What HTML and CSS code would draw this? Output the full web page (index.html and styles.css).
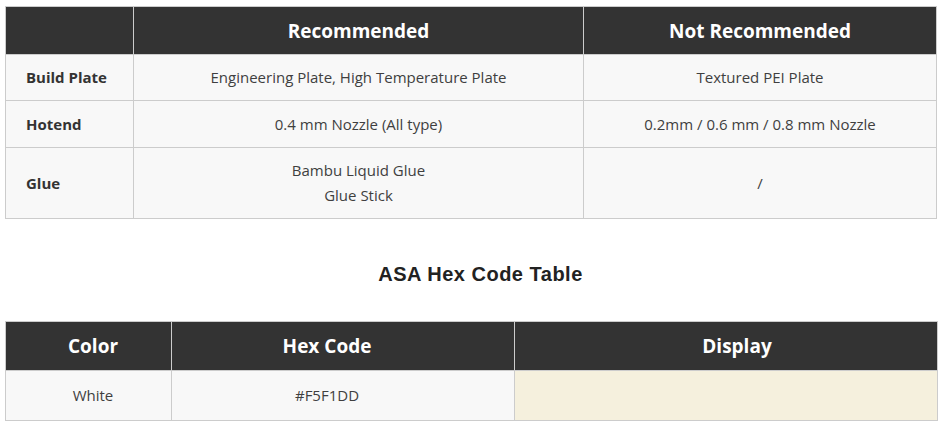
FILE: index.html
```html
<!DOCTYPE html>
<html>
<head>
<meta charset="utf-8">
<link rel="stylesheet" href="styles.css">
</head>
<body>
<table class="tbl tbl-rec">
  <colgroup><col class="c1"><col class="c2"><col class="c3"></colgroup>
  <thead>
    <tr><th></th><th>Recommended</th><th>Not Recommended</th></tr>
  </thead>
  <tbody>
    <tr class="r1"><td class="lbl">Build Plate</td><td>Engineering Plate, High Temperature Plate</td><td>Textured PEI Plate</td></tr>
    <tr class="r2"><td class="lbl">Hotend</td><td>0.4 mm Nozzle (All type)</td><td>0.2mm / 0.6 mm / 0.8 mm Nozzle</td></tr>
    <tr class="r3"><td class="lbl">Glue</td><td>Bambu Liquid Glue<br>Glue Stick</td><td>/</td></tr>
  </tbody>
</table>
<h3 class="title">ASA Hex Code Table</h3>
<table class="tbl tbl-hex">
  <colgroup><col class="h1"><col class="h2"><col class="h3"></colgroup>
  <thead>
    <tr><th class="k1">Color</th><th class="k2">Hex Code</th><th class="k3">Display</th></tr>
  </thead>
  <tbody>
    <tr class="hr"><td class="k1">White</td><td class="k2">#F5F1DD</td><td class="k3 swatch"></td></tr>
  </tbody>
</table>
</body>
</html>
```
FILE: styles.css
```css
html, body { margin: 0; padding: 0; background: #fff; }
body { padding: 6px 0 0 5px; font-family: "Open Sans", "Liberation Sans", sans-serif; color: #333; }
.tbl { border-collapse: collapse; table-layout: fixed; }
.tbl th, .tbl td { border: 1px solid #cccccc; padding: 0; text-align: center; vertical-align: middle; }
.tbl th { background: #333333; color: #fff; font-weight: 700; font-size: 19px; height: 47px; }
.tbl td { background: #f8f8f8; font-size: 15px; line-height: 25px; color: #3f3f3f; }
.tbl-rec { width: 931px; }
.c1 { width: 128px; } .c2 { width: 450px; } .c3 { width: 353px; }
.tbl-rec .lbl { text-align: left; padding-left: 20px; font-weight: 700; color: #333; }
.r1 td { height: 45px; } .r2 td { height: 46px; } .r3 td { height: 70px; }
.title { margin: 0; padding: 44px 0 0 20px; height: 59px; box-sizing: border-box; font-family: "Liberation Sans", Arial, sans-serif; font-size: 20px; letter-spacing: 0.5px; font-weight: 700; text-align: center; width: 931px; color: #222; line-height: 22px; }
.tbl-hex { width: 932px; margin-top: 43px; }
.h1 { width: 166px; } .h2 { width: 343px; } .h3 { width: 423px; }
.tbl-hex th { height: 48px; }
.tbl-hex .k1 { padding-left: 9px; }
.tbl-hex .k2 { padding-right: 32px; }
.tbl-hex .k3 { padding-left: 22px; }
.hr td { height: 49px; }
.tbl-hex .swatch { background: #f5f0dd; }
```
